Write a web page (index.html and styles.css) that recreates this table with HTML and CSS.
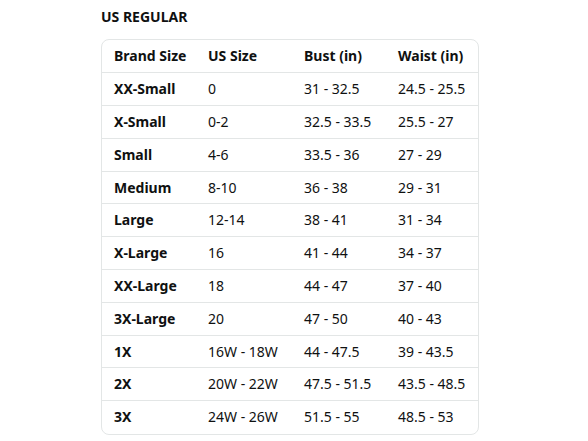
FILE: index.html
```html
<!DOCTYPE html>
<html>
<head>
<meta charset="utf-8">
<link rel="stylesheet" href="styles.css">
</head>
<body>
<div class="wrap">
  <h2 class="title">US REGULAR</h2>
  <div class="card">
    <table class="chart">
      <thead>
        <tr><th>Brand Size</th><th>US Size</th><th>Bust (in)</th><th>Waist (in)</th></tr>
      </thead>
      <tbody>
        <tr><th>XX-Small</th><td>0</td><td>31 - 32.5</td><td>24.5 - 25.5</td></tr>
        <tr><th>X-Small</th><td>0-2</td><td>32.5 - 33.5</td><td>25.5 - 27</td></tr>
        <tr><th>Small</th><td>4-6</td><td>33.5 - 36</td><td>27 - 29</td></tr>
        <tr><th>Medium</th><td>8-10</td><td>36 - 38</td><td>29 - 31</td></tr>
        <tr><th>Large</th><td>12-14</td><td>38 - 41</td><td>31 - 34</td></tr>
        <tr><th>X-Large</th><td>16</td><td>41 - 44</td><td>34 - 37</td></tr>
        <tr><th>XX-Large</th><td>18</td><td>44 - 47</td><td>37 - 40</td></tr>
        <tr><th>3X-Large</th><td>20</td><td>47 - 50</td><td>40 - 43</td></tr>
        <tr><th>1X</th><td>16W - 18W</td><td>44 - 47.5</td><td>39 - 43.5</td></tr>
        <tr><th>2X</th><td>20W - 22W</td><td>47.5 - 51.5</td><td>43.5 - 48.5</td></tr>
        <tr><th>3X</th><td>24W - 26W</td><td>51.5 - 55</td><td>48.5 - 53</td></tr>
      </tbody>
    </table>
  </div>
</div>
</body>
</html>
```
FILE: styles.css
```css
html, body {
  margin: 0;
  padding: 0;
  background: #ffffff;
}
body {
  font-family: "Noto Sans", "Open Sans", Arial, sans-serif;
  color: #0f1111;
}
.wrap {
  padding: 8px 0 0 101px;
}
.title {
  margin: 0 0 13px 0;
  font-size: 14px;
  font-weight: 700;
  line-height: 18px;
  letter-spacing: 0;
}
.card {
  width: 378px;
  border: 1px solid #e3e6e6;
  border-radius: 8px;
  overflow: hidden;
  box-sizing: border-box;
}
.chart {
  width: 100%;
  border-collapse: collapse;
  table-layout: fixed;
}
.chart th, .chart td {
  text-align: left;
  font-size: 14px;
  line-height: 18px;
  height: 32.8px;
  padding: 0 0 0 12px;
  box-sizing: border-box;
  white-space: nowrap;
}
.chart th {
  font-weight: 700;
}
.chart td {
  font-weight: 400;
}
.chart tr + tr th, .chart tr + tr td,
.chart tbody tr th, .chart tbody tr td {
  border-top: 1px solid #e3e6e6;
}
.chart th:nth-child(1) { width: 94px; }
.chart th:nth-child(2) { width: 96px; }
.chart th:nth-child(3) { width: 94px; }
```
